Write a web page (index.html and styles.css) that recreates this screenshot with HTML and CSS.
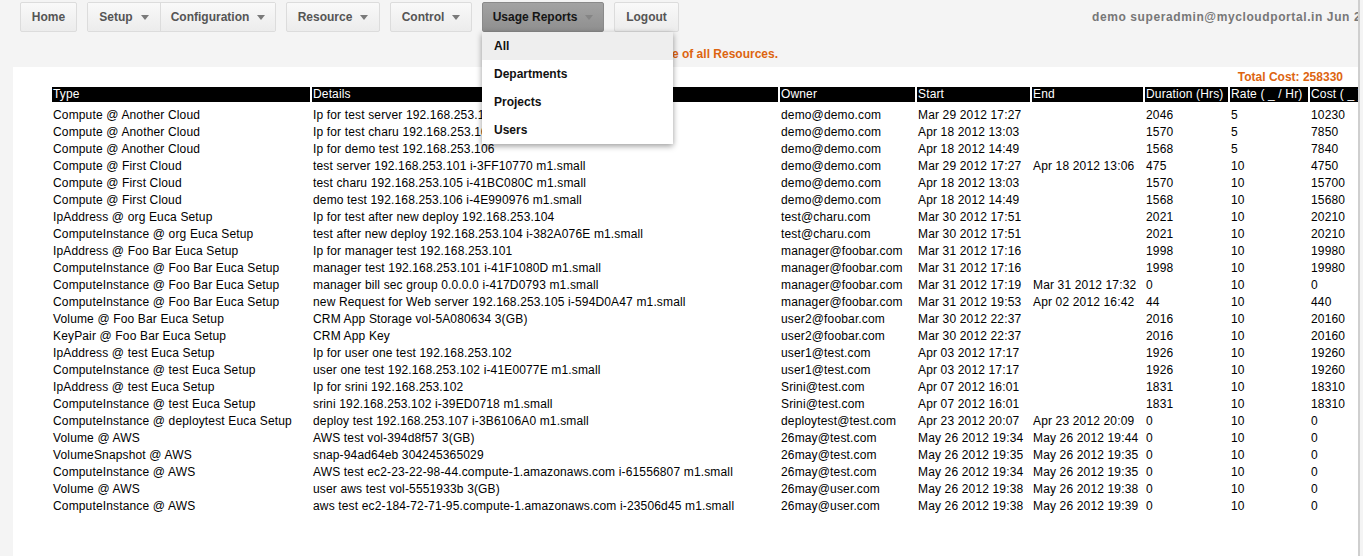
FILE: index.html
```html
<!DOCTYPE html>
<html>
<head>
<meta charset="utf-8">
<title>Usage Reports</title>
<link rel="stylesheet" href="styles.css">
</head>
<body>
<div class="frame">
  <div class="nav">
    <div class="btn w-home">Home</div>
    <div class="group">
      <div class="btn in-group w-setup">Setup <span class="caret"></span></div>
      <div class="btn in-group sep w-config">Configuration <span class="caret"></span></div>
    </div>
    <div class="btn w-resource">Resource <span class="caret"></span></div>
    <div class="btn w-control">Control <span class="caret"></span></div>
    <div class="menu-wrap">
      <div class="btn active w-usage">Usage Reports <span class="caret dark"></span></div>
      <ul class="dropdown">
        <li class="hover">All</li>
        <li>Departments</li>
        <li>Projects</li>
        <li>Users</li>
      </ul>
    </div>
    <div class="btn w-logout">Logout</div>
    <div class="userinfo">demo superadmin@mycloudportal.in Jun 26 2012 10:42</div>
  </div>

  <div class="message"><span>Below is the usage of all Resources.</span></div>

  <div class="panel">
    <div class="total">Total Cost: 258330</div>
    <table class="usage">
      <thead>
        <tr>
          <th class="c-type">Type</th>
          <th class="c-details">Details</th>
          <th class="c-owner">Owner</th>
          <th class="c-start">Start</th>
          <th class="c-end">End</th>
          <th class="c-dur">Duration (Hrs)</th>
          <th class="c-rate">Rate ( _ / Hr)</th>
          <th class="c-cost">Cost ( _ )</th>
        </tr>
      </thead>
      <tbody>
        <tr><td>Compute @ Another Cloud</td><td>Ip for test server 192.168.253.145</td><td>demo@demo.com</td><td>Mar 29 2012 17:27</td><td></td><td>2046</td><td>5</td><td>10230</td></tr>
        <tr><td>Compute @ Another Cloud</td><td>Ip for test charu 192.168.253.105</td><td>demo@demo.com</td><td>Apr 18 2012 13:03</td><td></td><td>1570</td><td>5</td><td>7850</td></tr>
        <tr><td>Compute @ Another Cloud</td><td>Ip for demo test 192.168.253.106</td><td>demo@demo.com</td><td>Apr 18 2012 14:49</td><td></td><td>1568</td><td>5</td><td>7840</td></tr>
        <tr><td>Compute @ First Cloud</td><td>test server 192.168.253.101 i-3FF10770 m1.small</td><td>demo@demo.com</td><td>Mar 29 2012 17:27</td><td>Apr 18 2012 13:06</td><td>475</td><td>10</td><td>4750</td></tr>
        <tr><td>Compute @ First Cloud</td><td>test charu 192.168.253.105 i-41BC080C m1.small</td><td>demo@demo.com</td><td>Apr 18 2012 13:03</td><td></td><td>1570</td><td>10</td><td>15700</td></tr>
        <tr><td>Compute @ First Cloud</td><td>demo test 192.168.253.106 i-4E990976 m1.small</td><td>demo@demo.com</td><td>Apr 18 2012 14:49</td><td></td><td>1568</td><td>10</td><td>15680</td></tr>
        <tr><td>IpAddress @ org Euca Setup</td><td>Ip for test after new deploy 192.168.253.104</td><td>test@charu.com</td><td>Mar 30 2012 17:51</td><td></td><td>2021</td><td>10</td><td>20210</td></tr>
        <tr><td>ComputeInstance @ org Euca Setup</td><td>test after new deploy 192.168.253.104 i-382A076E m1.small</td><td>test@charu.com</td><td>Mar 30 2012 17:51</td><td></td><td>2021</td><td>10</td><td>20210</td></tr>
        <tr><td>IpAddress @ Foo Bar Euca Setup</td><td>Ip for manager test 192.168.253.101</td><td>manager@foobar.com</td><td>Mar 31 2012 17:16</td><td></td><td>1998</td><td>10</td><td>19980</td></tr>
        <tr><td>ComputeInstance @ Foo Bar Euca Setup</td><td>manager test 192.168.253.101 i-41F1080D m1.small</td><td>manager@foobar.com</td><td>Mar 31 2012 17:16</td><td></td><td>1998</td><td>10</td><td>19980</td></tr>
        <tr><td>ComputeInstance @ Foo Bar Euca Setup</td><td>manager bill sec group 0.0.0.0 i-417D0793 m1.small</td><td>manager@foobar.com</td><td>Mar 31 2012 17:19</td><td>Mar 31 2012 17:32</td><td>0</td><td>10</td><td>0</td></tr>
        <tr><td>ComputeInstance @ Foo Bar Euca Setup</td><td>new Request for Web server 192.168.253.105 i-594D0A47 m1.small</td><td>manager@foobar.com</td><td>Mar 31 2012 19:53</td><td>Apr 02 2012 16:42</td><td>44</td><td>10</td><td>440</td></tr>
        <tr><td>Volume @ Foo Bar Euca Setup</td><td>CRM App Storage vol-5A080634 3(GB)</td><td>user2@foobar.com</td><td>Mar 30 2012 22:37</td><td></td><td>2016</td><td>10</td><td>20160</td></tr>
        <tr><td>KeyPair @ Foo Bar Euca Setup</td><td>CRM App Key</td><td>user2@foobar.com</td><td>Mar 30 2012 22:37</td><td></td><td>2016</td><td>10</td><td>20160</td></tr>
        <tr><td>IpAddress @ test Euca Setup</td><td>Ip for user one test 192.168.253.102</td><td>user1@test.com</td><td>Apr 03 2012 17:17</td><td></td><td>1926</td><td>10</td><td>19260</td></tr>
        <tr><td>ComputeInstance @ test Euca Setup</td><td>user one test 192.168.253.102 i-41E0077E m1.small</td><td>user1@test.com</td><td>Apr 03 2012 17:17</td><td></td><td>1926</td><td>10</td><td>19260</td></tr>
        <tr><td>IpAddress @ test Euca Setup</td><td>Ip for srini 192.168.253.102</td><td>Srini@test.com</td><td>Apr 07 2012 16:01</td><td></td><td>1831</td><td>10</td><td>18310</td></tr>
        <tr><td>ComputeInstance @ test Euca Setup</td><td>srini 192.168.253.102 i-39ED0718 m1.small</td><td>Srini@test.com</td><td>Apr 07 2012 16:01</td><td></td><td>1831</td><td>10</td><td>18310</td></tr>
        <tr><td>ComputeInstance @ deploytest Euca Setup</td><td>deploy test 192.168.253.107 i-3B6106A0 m1.small</td><td>deploytest@test.com</td><td>Apr 23 2012 20:07</td><td>Apr 23 2012 20:09</td><td>0</td><td>10</td><td>0</td></tr>
        <tr><td>Volume @ AWS</td><td>AWS test vol-394d8f57 3(GB)</td><td>26may@test.com</td><td>May 26 2012 19:34</td><td>May 26 2012 19:44</td><td>0</td><td>10</td><td>0</td></tr>
        <tr><td>VolumeSnapshot @ AWS</td><td>snap-94ad64eb 304245365029</td><td>26may@test.com</td><td>May 26 2012 19:35</td><td>May 26 2012 19:35</td><td>0</td><td>10</td><td>0</td></tr>
        <tr><td>ComputeInstance @ AWS</td><td>AWS test ec2-23-22-98-44.compute-1.amazonaws.com i-61556807 m1.small</td><td>26may@test.com</td><td>May 26 2012 19:34</td><td>May 26 2012 19:35</td><td>0</td><td>10</td><td>0</td></tr>
        <tr><td>Volume @ AWS</td><td>user aws test vol-5551933b 3(GB)</td><td>26may@user.com</td><td>May 26 2012 19:38</td><td>May 26 2012 19:38</td><td>0</td><td>10</td><td>0</td></tr>
        <tr><td>ComputeInstance @ AWS</td><td>aws test ec2-184-72-71-95.compute-1.amazonaws.com i-23506d45 m1.small</td><td>26may@user.com</td><td>May 26 2012 19:38</td><td>May 26 2012 19:39</td><td>0</td><td>10</td><td>0</td></tr>
      </tbody>
    </table>
  </div>
</div>
</body>
</html>
```

FILE: styles.css
```css
html, body {
  margin: 0;
  padding: 0;
  background: #f4f4f4;
  overflow: hidden;
}

body {
  font-family: "Liberation Sans", Arial, sans-serif;
  font-size: 12px;
  color: #000;
}

.frame {
  width: 1358px;
  height: 556px;
  overflow: hidden;
  border-right: 2px solid #cfcfcf;
  background: #f4f4f4;
}

/* ---------- navigation ---------- */
.nav {
  display: flex;
  align-items: flex-start;
  gap: 10px;
  padding: 2px 0 2px 20px;
  height: 30px;
}

.group {
  display: flex;
  border: 1px solid #dcdcdc;
  border-radius: 2px;
}

.btn {
  box-sizing: border-box;
  height: 30px;
  display: flex;
  align-items: center;
  justify-content: center;
  gap: 8px;
  border: 1px solid #dcdcdc;
  border-radius: 2px;
  background: linear-gradient(#f9f9f9, #ececec);
  font-weight: bold;
  font-size: 12px;
  color: #555;
  white-space: nowrap;
  flex-shrink: 0;
}

.btn.in-group {
  border: none;
  height: 28px;
  border-radius: 0;
}

.btn.sep {
  border-left: 1px solid #dcdcdc;
}

.w-home { width: 57px; }
.w-setup { width: 72px; }
.w-config { width: 115px; }
.w-resource { width: 94px; }
.w-control { width: 82px; }
.w-usage { width: 122px; }
.w-logout { width: 65px; }

.caret {
  display: inline-block;
  width: 0;
  height: 0;
  border-left: 4px solid transparent;
  border-right: 4px solid transparent;
  border-top: 5px solid #7a7a7a;
}

.caret.dark {
  border-top-color: #858585;
}

.btn.active {
  background: linear-gradient(#a3a3a3, #8f8f8f);
  border-color: #8a8a8a;
  color: #151515;
}

.menu-wrap {
  position: relative;
  flex-shrink: 0;
}

.dropdown {
  position: absolute;
  top: 30px;
  left: 0;
  width: 191px;
  margin: 0;
  padding: 0;
  list-style: none;
  background: #fff;
  box-shadow: 0 2px 6px rgba(0, 0, 0, 0.4);
  z-index: 10;
}

.dropdown li {
  height: 28px;
  line-height: 28px;
  padding-left: 12px;
  font-weight: bold;
  font-size: 12px;
  color: #111;
}

.dropdown li.hover {
  background: #eeeeee;
}

.userinfo {
  margin-left: 403px;
  line-height: 30px;
  font-weight: bold;
  font-size: 12px;
  letter-spacing: 0.6px;
  color: #777;
  white-space: nowrap;
  flex-shrink: 0;
}

/* ---------- message ---------- */
.message {
  width: 778px;
  text-align: right;
  padding: 13px 0 6px;
  line-height: 14px;
  font-weight: bold;
  color: #dd6410;
}

/* ---------- panel ---------- */
.panel {
  margin-left: 13px;
  width: 1345px;
  height: 500px;
  background: #fff;
  padding-top: 3px;
  overflow: hidden;
}

.total {
  text-align: right;
  padding-right: 15px;
  line-height: 14px;
  margin-bottom: 3px;
  font-weight: bold;
  color: #dd6410;
}

.usage {
  margin-left: 37px;
  border-collapse: separate;
  border-spacing: 2px 0;
  table-layout: fixed;
  width: 1322px;
  font-size: 12px;
}

.usage th,
.usage td {
  box-sizing: border-box;
  padding: 0 0 0 1px;
  text-align: left;
  white-space: nowrap;
  overflow: hidden;
  letter-spacing: 0.15px;
}

.usage th {
  background: #000;
  color: #fff;
  font-weight: normal;
  height: 15px;
  line-height: 15px;
}

.usage td {
  line-height: 17px;
  height: 17px;
  color: #000;
}

.usage tbody tr:first-child td {
  padding-top: 5px;
  height: 22px;
}

.c-type { width: 258px; }
.c-details { width: 466px; }
.c-owner { width: 135px; }
.c-start { width: 113px; }
.c-end { width: 111px; }
.c-dur { width: 83px; }
.c-rate { width: 78px; }
.c-cost { width: 60px; }
```
